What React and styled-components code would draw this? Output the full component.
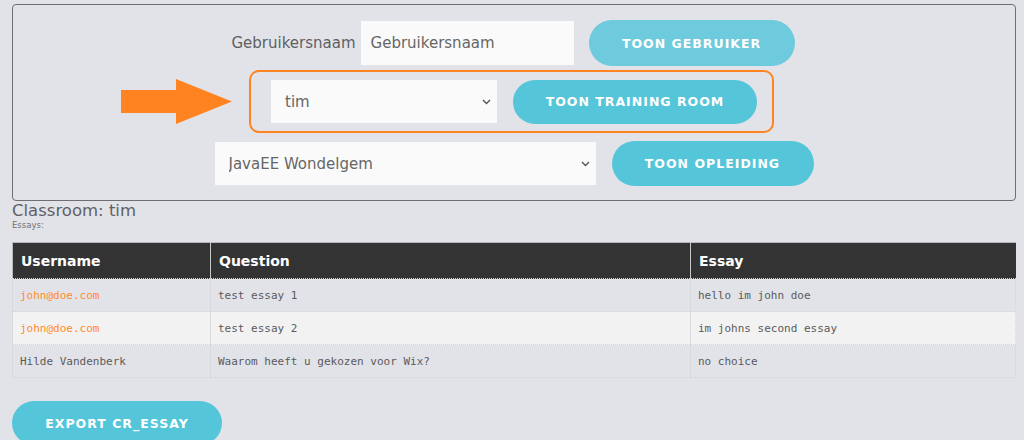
import React from "react";
import styled, { createGlobalStyle } from "styled-components";

const Global = createGlobalStyle`
  html, body { margin: 0; padding: 0; background: #e2e3e8; }
  body { font-family: "DejaVu Sans", "Noto Sans", sans-serif; overflow: hidden; }
  * { box-sizing: border-box; }
`;

const Page = styled.div`
  padding: 4px 8px 0 12px;
  width: 1024px;
`;

const Panel = styled.div`
  border: 1px solid #6f6f71;
  border-radius: 4px;
  height: 197px;
  padding-top: 15px;
  display: flex;
  flex-direction: column;
  align-items: center;
`;

const Row = styled.div`
  display: flex;
  align-items: center;
  gap: ${(p) => p.$gap ?? 16}px;
  margin-top: ${(p) => p.$mt || 0}px;
  margin-left: ${(p) => p.$ml || 0}px;
`;

const Label = styled.span`
  font-size: 15px;
  color: #5f5f62;
  margin-right: -10px;
`;

const Input = styled.input`
  width: ${(p) => p.$w}px;
  height: 44px;
  border: none;
  background: #fafafa;
  padding: 0 10px;
  font-family: inherit;
  font-size: 15px;
  color: #666;
  outline: none;
  &::placeholder { color: #666; }
`;

const SelectWrap = styled.div`
  position: relative;
  width: ${(p) => p.$w}px;
  height: ${(p) => p.$h}px;
`;

const Select = styled.select`
  appearance: none;
  width: 100%;
  height: 100%;
  border: none;
  background: #fafafa;
  font-family: inherit;
  font-size: 15px;
  color: #666;
  padding: 0 14px;
  outline: none;
`;

const Chevron = styled.svg`
  position: absolute;
  right: 6px;
  top: 50%;
  margin-top: -3px;
  pointer-events: none;
`;

const Button = styled.button`
  height: ${(p) => p.$h || 44}px;
  width: ${(p) => p.$w}px;
  border: none;
  border-radius: 24px;
  background: ${(p) => (p.$light ? "#6dcbdd" : "#55c5d9")};
  color: #fff;
  font-family: "DejaVu Sans", sans-serif;
  font-weight: bold;
  font-size: 12.5px;
  letter-spacing: 1px;
  padding: 0;
`;

const Highlight = styled.div`
  display: flex;
  align-items: center;
  gap: 16px;
  border: 2px solid #ff8421;
  border-radius: 10px;
  height: 63px;
  padding: 0 15px 0 20px;
`;

const ArrowMark = styled.svg`
  display: block;
  margin-right: 17px;
`;

const Title = styled.div`
  font-size: 16.5px;
  color: #606064;
  line-height: 18px;
  margin-top: 1px;
`;

const Sub = styled.div`
  font-size: 8.5px;
  color: #707074;
  line-height: 10px;
`;

const Table = styled.table`
  margin-top: 12px;
  width: 1004px;
  border-collapse: collapse;
  border-top: 1px solid #b9b9bb;
  border-left: 1px solid #b9b9bb;
`;

const Th = styled.th`
  background: #333333;
  color: #fff;
  text-align: left;
  font-family: "DejaVu Sans", sans-serif;
  font-weight: bold;
  font-size: 14px;
  height: 36px;
  padding: 0 8px;
  border-left: 1px solid #c8c8ca;
  width: ${(p) => p.$w}px;
  &:first-child { border-left: none; }
`;

const Tr = styled.tr`
  background: ${(p) => (p.$alt ? "#f2f2f2" : "#e2e3e8")};
`;

const Td = styled.td`
  font-family: "DejaVu Sans Mono", "Liberation Mono", monospace;
  font-size: 11px;
  color: ${(p) => (p.$accent ? "#ff8c2c" : "#5a5a5d")};
  height: 33px;
  padding: 0 7px;
  border: 1px dotted #d4d5d9;
  border-left: 1px solid #d8d9dd;
`;

const Footer = styled.div`
  margin-top: 23px;
`;

const rows = [
  { u: "john@doe.com", q: "test essay 1", e: "hello im john doe", accent: true },
  { u: "john@doe.com", q: "test essay 2", e: "im johns second essay", accent: true },
  { u: "Hilde Vandenberk", q: "Waarom heeft u gekozen voor Wix?", e: "no choice" },
];

const ChevronIcon = () => (
  <Chevron width="9" height="6" viewBox="0 0 9 6">
    <path d="M1 1l3.5 3.5L8 1" fill="none" stroke="#555" strokeWidth="1.4" />
  </Chevron>
);

export default function App() {
  return (
    <Page>
      <Global />
      <Panel>
        <Row $gap={15} $ml={-2}>
          <Label>Gebruikersnaam</Label>
          <Input $w={213} placeholder="Gebruikersnaam" />
          <Button $w={206} $h={46} $light>TOON GEBRUIKER</Button>
        </Row>
        <Row $gap={0} $mt={4} $ml={-134}>
          <ArrowMark width="112" height="45" viewBox="0 0 112 45">
            <path d="M1 11H56V0L112 22.5L56 45V34H1Z" fill="#ff8421" />
          </ArrowMark>
          <Highlight>
            <SelectWrap $w={226} $h={43}>
              <Select defaultValue="tim">
                <option>tim</option>
              </Select>
              <ChevronIcon />
            </SelectWrap>
            <Button $w={244} $h={44}>TOON TRAINING ROOM</Button>
          </Highlight>
        </Row>
        <Row $gap={16} $mt={8} $ml={0}>
          <SelectWrap $w={381} $h={43}>
            <Select defaultValue="JavaEE Wondelgem">
              <option>JavaEE Wondelgem</option>
            </Select>
            <ChevronIcon />
          </SelectWrap>
          <Button $w={202} $h={45}>TOON OPLEIDING</Button>
        </Row>
      </Panel>
      <Title>Classroom: tim</Title>
      <Sub>Essays:</Sub>
      <Table>
        <thead>
          <tr>
            <Th $w={198}>Username</Th>
            <Th $w={480}>Question</Th>
            <Th>Essay</Th>
          </tr>
        </thead>
        <tbody>
          {rows.map((r, i) => (
            <Tr key={i} $alt={i === 1}>
              <Td $accent={r.accent}>{r.u}</Td>
              <Td>{r.q}</Td>
              <Td>{r.e}</Td>
            </Tr>
          ))}
        </tbody>
      </Table>
      <Footer>
        <Button $w={210} $h={44}>EXPORT CR_ESSAY</Button>
      </Footer>
    </Page>
  );
}
